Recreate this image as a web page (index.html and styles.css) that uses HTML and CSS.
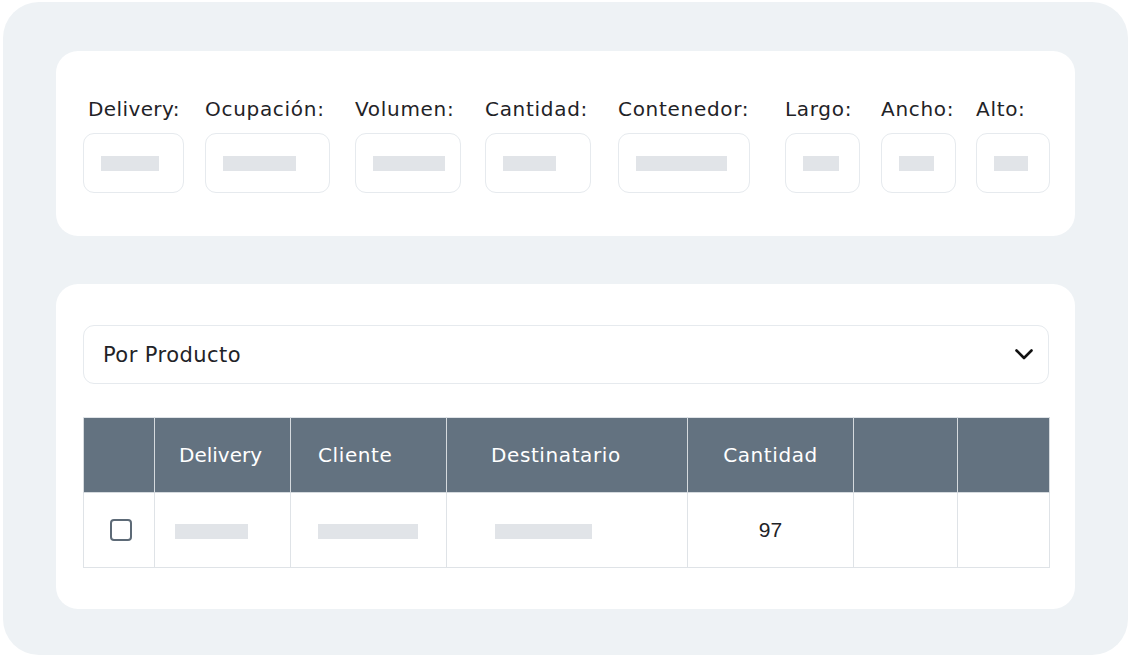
FILE: index.html
```html
<!DOCTYPE html>
<html lang="es">

<head>
    <meta charset="utf-8">
    <title>Detalle de contenedor</title>
    <link rel="stylesheet" href="styles.css">
</head>

<body>
    <div class="page">
        <!-- datos del contenedor -->
        <div class="card card_info">
            <div class="fields">
                <div class="field field_first">
                    <label>Delivery:</label>
                    <div class="box w101"><span class="ph w58"></span></div>
                </div>
                <div class="field">
                    <label>Ocupación:</label>
                    <div class="box w125"><span class="ph w73"></span></div>
                </div>
                <div class="field">
                    <label>Volumen:</label>
                    <div class="box w106"><span class="ph w72"></span></div>
                </div>
                <div class="field">
                    <label>Cantidad:</label>
                    <div class="box w106"><span class="ph w53"></span></div>
                </div>
                <div class="field">
                    <label>Contenedor:</label>
                    <div class="box w132"><span class="ph w91"></span></div>
                </div>
                <div class="field">
                    <label>Largo:</label>
                    <div class="box w75"><span class="ph w36"></span></div>
                </div>
                <div class="field">
                    <label>Ancho:</label>
                    <div class="box w75"><span class="ph w35"></span></div>
                </div>
                <div class="field">
                    <label>Alto:</label>
                    <div class="box w74"><span class="ph w34"></span></div>
                </div>
            </div>
        </div>

        <!-- listado -->
        <div class="card card_list">
            <div class="select">
                <span>Por Producto</span>
                <svg class="chevron" width="18" height="11" viewBox="0 0 18 11">
                    <polyline points="1.5,1.5 9,9 16.5,1.5" fill="none" stroke="#111" stroke-width="2.6" stroke-linecap="round" stroke-linejoin="round"/>
                </svg>
            </div>

            <table class="grid">
                <colgroup>
                    <col style="width:71px">
                    <col style="width:136px">
                    <col style="width:156px">
                    <col style="width:241px">
                    <col style="width:166px">
                    <col style="width:104px">
                    <col style="width:92px">
                </colgroup>
                <thead>
                    <tr>
                        <th></th>
                        <th class="c_delivery">Delivery</th>
                        <th class="c_cliente">Cliente</th>
                        <th class="c_dest">Destinatario</th>
                        <th class="c_center">Cantidad</th>
                        <th></th>
                        <th></th>
                    </tr>
                </thead>
                <tbody>
                    <tr>
                        <td class="c_check"><span class="check"></span></td>
                        <td class="c_delivery_b"><span class="ph w73"></span></td>
                        <td class="c_cliente"><span class="ph w100"></span></td>
                        <td class="c_dest_b"><span class="ph w97"></span></td>
                        <td class="c_center num">97</td>
                        <td></td>
                        <td></td>
                    </tr>
                </tbody>
            </table>
        </div>
    </div>
</body>

</html>
```

FILE: styles.css
```css
    body {
        margin: 0;
        background: #fff;
        font-family: "DejaVu Sans", "Open Sans", sans-serif;
        color: #1f2327;
    }

    .page {
        margin: 2px 2px 2px 3px;
        width: 1125px;
        height: 653px;
        box-sizing: border-box;
        padding: 49px 53px 0 53px;
        background: #eef2f5;
        border-radius: 36px;
    }

    .card {
        background: #fff;
        border-radius: 22px;
        padding: 0 26px 0 27px;
    }

    /* tarjeta de datos */
    .card_info {
        height: 185px;
        box-sizing: border-box;
        padding-top: 46px;
    }

    .fields {
        display: grid;
        grid-template-columns: 122px 150px 130px 133px 167px 96px 95px 74px;
    }

    .field label {
        display: block;
        font-size: 20px;
        line-height: 24px;
        letter-spacing: 0.7px;
        white-space: nowrap;
    }

    .field_first label {
        padding-left: 5px;
        letter-spacing: 0.4px;
    }

    .box {
        margin-top: 12px;
        height: 60px;
        box-sizing: border-box;
        border: 1.5px solid #e6eaee;
        border-radius: 11px;
        display: flex;
        align-items: center;
        padding-left: 17px;
    }

    .ph {
        display: inline-block;
        height: 15px;
        background: #e1e4e8;
        vertical-align: middle;
    }

    .w101 { width: 101px; }
    .w125 { width: 125px; }
    .w106 { width: 106px; }
    .w132 { width: 132px; }
    .w75 { width: 75px; }
    .w74 { width: 74px; }

    .w58 { width: 58px; }
    .w73 { width: 73px; }
    .w72 { width: 72px; }
    .w53 { width: 53px; }
    .w91 { width: 91px; }
    .w36 { width: 36px; }
    .w35 { width: 35px; }
    .w34 { width: 34px; }
    .w100 { width: 100px; }
    .w97 { width: 97px; }

    /* tarjeta del listado */
    .card_list {
        margin-top: 48px;
        height: 325px;
        box-sizing: border-box;
        padding-top: 41px;
    }

    .select {
        height: 59px;
        box-sizing: border-box;
        border: 1.5px solid #e6eaee;
        border-radius: 11px;
        display: flex;
        align-items: center;
        justify-content: space-between;
        padding: 0 15px 0 19px;
        font-size: 21px;
        letter-spacing: 0.45px;
    }

    .grid {
        margin-top: 33px;
        width: 966px;
        table-layout: fixed;
        border-collapse: collapse;
        border: 1px solid #dfe3e7;
    }

    .grid th,
    .grid td {
        border: 1px solid #dfe3e7;
        padding: 0;
        text-align: left;
        vertical-align: middle;
    }

    .grid th {
        height: 74px;
        background: #637280;
        color: #fff;
        font-weight: normal;
        font-size: 20px;
        letter-spacing: 0.6px;
        border-color: #d5dade;
        border-top-color: #dfe3e7;
    }

    .grid td {
        height: 74px;
        font-size: 20px;
    }

    .c_delivery { padding-left: 24px !important; letter-spacing: 0 !important; }
    .c_delivery_b { padding-left: 20px !important; }
    .c_cliente { padding-left: 27px !important; }
    .c_dest { padding-left: 44px !important; }
    .c_dest_b { padding-left: 48px !important; }
    .c_center { text-align: center !important; }
    .c_check { padding-left: 26px !important; }

    .num {
        font-family: "Liberation Sans", Arial, sans-serif;
        font-size: 21px !important;
    }

    .check {
        display: block;
        width: 22px;
        height: 22px;
        box-sizing: border-box;
        border: 2px solid #5d6a77;
        border-radius: 4px;
    }
```
